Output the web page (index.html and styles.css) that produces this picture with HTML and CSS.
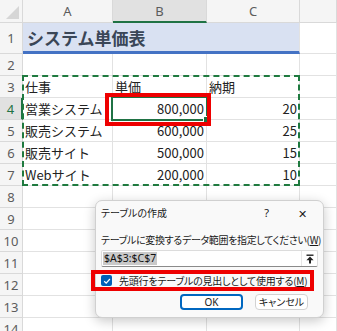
FILE: index.html
```html
<!DOCTYPE html>
<html lang="ja">
<head>
<meta charset="utf-8">
<link rel="stylesheet" href="styles.css">
</head>
<body>
<div class="sheet">
  <div class="grid">
    <div class="hd corner"><svg width="22" height="22" viewBox="0 0 22 22"><polygon points="6,19 19,19 19,6" fill="#d6d6d6"/></svg></div>
    <div class="hd col">A</div>
    <div class="hd col sel-col">B</div>
    <div class="hd col">C</div>
    <div class="hd col"></div>

    <div class="hd row">1</div>
    <div class="c title">システム単価表</div>
    <div class="c"></div>

    <div class="hd row">2</div><div class="c"></div><div class="c"></div><div class="c"></div><div class="c"></div>

    <div class="hd row">3</div><div class="c">仕事</div><div class="c">単価</div><div class="c">納期</div><div class="c"></div>

    <div class="hd row sel-row">4</div><div class="c">営業システム</div><div class="c num">800,000</div><div class="c num">20</div><div class="c"></div>

    <div class="hd row">5</div><div class="c">販売システム</div><div class="c num">600,000</div><div class="c num">25</div><div class="c"></div>

    <div class="hd row">6</div><div class="c">販売サイト</div><div class="c num">500,000</div><div class="c num">15</div><div class="c"></div>

    <div class="hd row">7</div><div class="c">Webサイト</div><div class="c num">200,000</div><div class="c num">10</div><div class="c"></div>

    <div class="hd row">8</div><div class="c"></div><div class="c"></div><div class="c"></div><div class="c"></div>
    <div class="hd row">9</div><div class="c"></div><div class="c"></div><div class="c"></div><div class="c"></div>
    <div class="hd row">10</div><div class="c"></div><div class="c"></div><div class="c"></div><div class="c"></div>
    <div class="hd row">11</div><div class="c"></div><div class="c"></div><div class="c"></div><div class="c"></div>
    <div class="hd row">12</div><div class="c"></div><div class="c"></div><div class="c"></div><div class="c"></div>
    <div class="hd row">13</div><div class="c"></div><div class="c"></div><div class="c"></div><div class="c"></div>
    <div class="hd row">14</div><div class="c"></div><div class="c"></div><div class="c"></div><div class="c"></div>
  </div>

  <div class="ants"></div>
  <div class="active"><span class="handle"></span></div>
  <div class="redbox"></div>

  <div class="dialog">
    <div class="dlg-title">
      <span class="dlg-name">テーブルの作成</span>
      <span class="dlg-q">?</span>
      <span class="dlg-x">✕</span>
    </div>
    <div class="dlg-label">テーブルに変換するデータ範囲を指定してください(<u>W</u>)</div>
    <div class="dlg-input">
      <span class="range">$A$3:$C$7</span>
      <span class="pick"><svg width="10" height="10" viewBox="0 0 10 10"><rect x="1.5" y="0.5" width="7" height="1.4" fill="#222"/><polygon points="5,2.6 8.6,6.2 6,6.2 6,9.5 4,9.5 4,6.2 1.4,6.2" fill="#222"/></svg></span>
    </div>
    <div class="dlg-check">
      <span class="box"><svg width="10" height="10" viewBox="0 0 10 10"><polyline points="2.2,5.2 4.2,7.1 7.9,3" fill="none" stroke="#fff" stroke-width="1.2"/></svg></span>
      <span class="check-text">先頭行をテーブルの見出しとして使用する(<u>M</u>)</span>
    </div>
    <div class="dlg-buttons">
      <span class="btn ok">OK</span>
      <span class="btn">キャンセル</span>
    </div>
  </div>
</div>
</body>
</html>
```

FILE: styles.css
```css
html, body {
  margin: 0;
  padding: 0;
  background: #fff;
}
body {
  width: 337px;
  height: 331px;
  overflow: hidden;
  font-family: "Noto Sans CJK JP", "Noto Sans", sans-serif;
}
.sheet {
  position: relative;
  width: 337px;
  height: 331px;
  overflow: hidden;
}
.grid {
  display: grid;
  grid-template-columns: 23px 90px 94px 93px 1fr;
  grid-template-rows: 23px 31px repeat(13, 22px);
}
.grid > div {
  box-sizing: border-box;
  border-right: 1px solid #e2e2e2;
  border-bottom: 1px solid #e2e2e2;
  overflow: hidden;
  white-space: nowrap;
}
.hd {
  background: #f5f5f5;
  color: #5c5c5c;
  font-family: "Noto Sans", sans-serif;
  font-size: 13px;
  display: flex;
  align-items: center;
  justify-content: center;
}
.grid > .hd {
  border-color: #d9d9d9;
}
.corner {
  align-items: flex-start;
  justify-content: flex-start;
}
.corner svg { display: block; }
.grid > .sel-col {
  background: #e1e1e1;
  border-bottom: 2px solid #1f7244;
}
.grid > .sel-row {
  background: #e1e1e1;
  color: #1f7244;
  border-right: 2px solid #1f7244;
}
.c {
  font-size: 13px;
  color: #222;
  padding: 0 2px;
  display: flex;
  align-items: center;
}
.num {
  justify-content: flex-end;
}
.grid > .title {
  grid-column: 2 / span 3;
  background: #d9e1f2;
  border-bottom: 3px solid #4472c4;
  font-size: 17px;
  font-weight: bold;
  color: #3a4657;
  padding-left: 4px;
  padding-top: 1px;
}

.ants {
  position: absolute;
  left: 22px;
  top: 75px;
  width: 278px;
  height: 111px;
  box-sizing: border-box;
  border: 2px dashed #1f7a3f;
}
.active {
  position: absolute;
  left: 111px;
  top: 96px;
  width: 97px;
  height: 25px;
  box-sizing: border-box;
  border: 2px solid #1f7244;
}
.handle {
  position: absolute;
  right: -4px;
  bottom: -4px;
  width: 5px;
  height: 5px;
  background: #1f7244;
  border: 1px solid #fff;
}
.redbox {
  position: absolute;
  left: 105px;
  top: 93px;
  width: 106px;
  height: 33px;
  box-sizing: border-box;
  border: 4px solid #ee0000;
}

.dialog {
  position: absolute;
  left: 95px;
  top: 200px;
  width: 229px;
  height: 118px;
  box-sizing: border-box;
  background: #f9f9f9;
  border: 1px solid #d0d0d0;
  border-radius: 7px;
  box-shadow: 0 3px 12px rgba(0,0,0,0.22);
  padding: 0 5px;
  font-size: 10px;
  line-height: 14px;
  color: #1a1a1a;
  font-feature-settings: "palt";
  display: flex;
  flex-direction: column;
}
.dlg-title {
  display: flex;
  align-items: center;
  height: 24px;
  flex: none;
}
.dlg-name { flex: 1; }
.dlg-q {
  font-family: "Noto Sans", sans-serif;
  font-size: 11px;
  margin-right: 29px;
}
.dlg-x {
  font-size: 11px;
  margin-right: 11px;
}
.dlg-label {
  margin-top: 8px;
  height: 14px;
  flex: none;
  letter-spacing: -0.35px;
  white-space: nowrap;
}
.dlg-label u, .check-text u { text-underline-offset: 1px; }
.dlg-input {
  margin-top: 3px;
  height: 17px;
  flex: none;
  box-sizing: border-box;
  background: #fff;
  border: 1px solid #dcdcdc;
  border-bottom-color: #8a8a8a;
  border-radius: 2px;
  display: flex;
  align-items: center;
  padding-left: 1px;
}
.range {
  background: #c9c9c9;
  font-family: "Noto Sans", sans-serif;
  font-size: 10.5px;
  line-height: 13px;
  padding: 0 1px;
  color: #111;
}
.pick {
  margin-left: auto;
  width: 15px;
  height: 15px;
  display: flex;
  align-items: center;
  justify-content: center;
  border-left: 1px solid #e6e6e6;
}
.pick svg { display: block; }
.dlg-check {
  margin: 3px 4px 0 -10px;
  height: 21px;
  flex: none;
  box-sizing: border-box;
  border: 4px solid #ee0000;
  display: flex;
  align-items: center;
  gap: 7px;
  padding-left: 6px;
  white-space: nowrap;
}
.check-text {
  letter-spacing: -0.2px;
}
.box {
  width: 11px;
  height: 11px;
  flex: none;
  border-radius: 2px;
  background: #005fb8;
  display: flex;
  align-items: center;
  justify-content: center;
}
.box svg { display: block; }
.dlg-buttons {
  display: flex;
  justify-content: flex-end;
  gap: 12px;
  margin-top: 3px;
  padding-right: 10px;
  flex: none;
}
.btn {
  width: 53px;
  height: 16px;
  box-sizing: border-box;
  background: #fff;
  border: 1px solid #d2d2d2;
  border-radius: 4px;
  display: flex;
  align-items: center;
  justify-content: center;
  font-size: 10px;
}
.btn.ok {
  width: 63px;
  border: 2px solid #0067c0;
  font-family: "Noto Sans", sans-serif;
}
```
